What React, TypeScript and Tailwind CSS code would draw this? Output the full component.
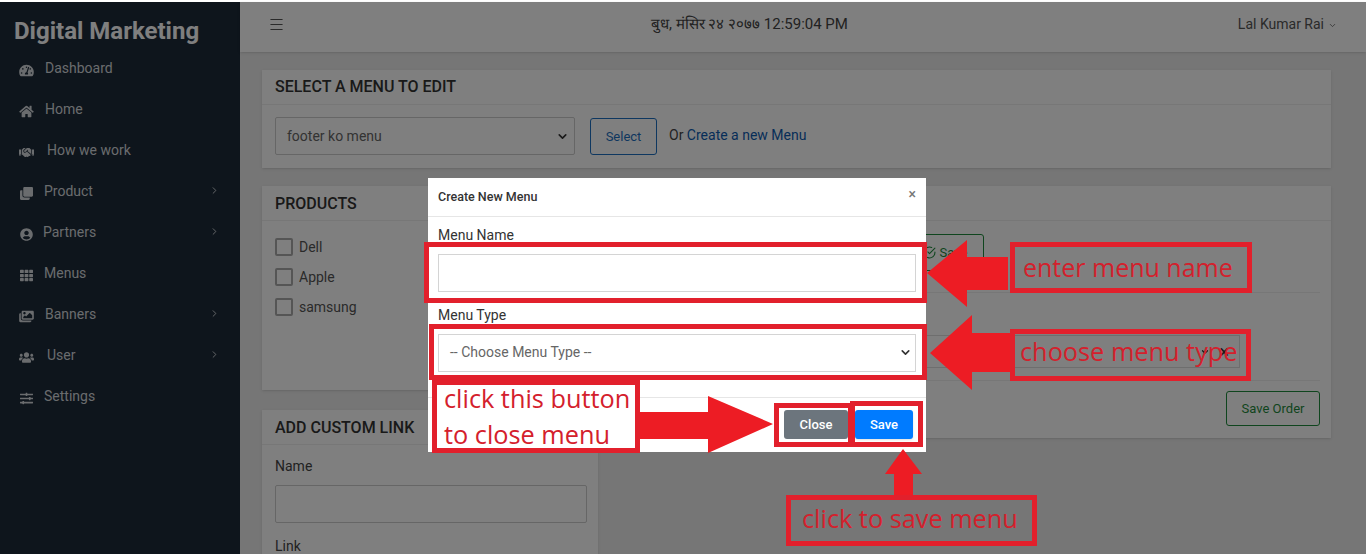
import { ChevronDown, ChevronRight, Menu as MenuIcon } from "lucide-react";
import type { ReactNode } from "react";
import {
  FaClone,
  FaHandshake,
  FaHome,
  FaImages,
  FaSlidersH,
  FaTachometerAlt,
  FaTh,
  FaUserCircle,
  FaUsers,
} from "react-icons/fa";
import { FiCheckCircle } from "react-icons/fi";

const sideItems = [
  { label: "Dashboard", icon: FaTachometerAlt, gap: "ml-[11px]", arrow: false },
  { label: "Home", icon: FaHome, gap: "ml-[11px]", arrow: false },
  { label: "How we work", icon: FaHandshake, gap: "ml-[13px]", arrow: false },
  { label: "Product", icon: FaClone, gap: "ml-[10px]", arrow: true },
  { label: "Partners", icon: FaUserCircle, gap: "ml-[9px]", arrow: true },
  { label: "Menus", icon: FaTh, gap: "ml-[10px]", arrow: false },
  { label: "Banners", icon: FaImages, gap: "ml-[11px]", arrow: true },
  { label: "User", icon: FaUsers, gap: "ml-[13px]", arrow: true },
  { label: "Settings", icon: FaSlidersH, gap: "ml-[10px]", arrow: false },
];

function Sidebar() {
  return (
    <aside className="w-[240px] shrink-0 bg-[#1c2a38] text-[#d4d8dc]">
      <div className="pl-[14px] pt-[14px] text-[24px] font-bold leading-[30px] text-white">
        Digital Marketing
      </div>
      <nav className="mt-[2px] flex flex-col">
        {sideItems.map((item) => (
          <div key={item.label} className="flex h-[41px] items-center pl-[19px] pr-[20px]">
            <item.icon className="mt-[4px] w-[15px] shrink-0 text-[13px]" />
            <span className={"-mt-[1px] text-[14px] " + item.gap}>{item.label}</span>
            {item.arrow && <ChevronRight className="-mt-[2px] ml-auto h-[11px] w-[11px]" />}
          </div>
        ))}
      </nav>
    </aside>
  );
}

function Topbar() {
  return (
    <header className="relative flex h-[50px] shrink-0 items-center bg-white pb-[6px] pl-[28px] pr-[29px] text-[14px] text-[#555] shadow-sm">
      <MenuIcon className="h-[17px] w-[17px]" strokeWidth={1.5} />
      <div className="flex-1 pr-[24px] text-center text-[15px] leading-[20px] text-[#444]">
        बुध, मंसिर २४ २०७७ 12:59:04 PM
      </div>
      <span>Lal Kumar Rai</span>
      <ChevronDown className="ml-[4px] mt-[3px] h-[9px] w-[9px]" />
    </header>
  );
}

function Card({
  title,
  head,
  className,
  children,
}: {
  title: string;
  head?: string;
  className: string;
  children?: ReactNode;
}) {
  return (
    <section className={"bg-white shadow-sm " + className}>
      <div className={"flex h-[35px] items-center border-b border-[#eee] px-[13px] text-[16px] font-medium text-[#333] " + (head ?? "")}>
        {title}
      </div>
      {children}
    </section>
  );
}

function Check({ label }: { label: string }) {
  return (
    <label className="flex h-[30px] items-center text-[14px] text-[#555]">
      <span className="mr-[6px] h-[18px] w-[18px] rounded-[2px] border-2 border-[#aaa]" />
      {label}
    </label>
  );
}

function Content() {
  return (
    <main className="flex min-w-0 flex-1 flex-col gap-[18px] pl-[22px] pr-[35px] pt-[18px]">
      <Card title="SELECT A MENU TO EDIT" className="h-[98px] shrink-0">
        <div className="flex items-center px-[13px] pt-[12px] text-[14px] text-[#444]">
          <div className="flex h-[38px] w-[300px] items-center justify-between rounded-[2px] border border-[#ccc] pl-[11px] pr-[12px] text-[#666]">
            footer ko menu
            <ChevronDown className="-mr-[7px] h-[13px] w-[13px] text-[#333]" strokeWidth={3} />
          </div>
          <button className="ml-[15px] mt-[1px] h-[37px] w-[67px] rounded-[3px] border border-[#1d6fc0] text-[13px] text-[#1d6fc0]">
            Select
          </button>
          <span className="ml-[12px] -mt-[2px]">
            Or <span className="text-[#0d5bb0]">Create a new Menu</span>
          </span>
        </div>
      </Card>
      <div className="flex gap-[18px]">
        <div className="flex w-[336px] shrink-0 flex-col gap-[20px]">
          <Card title="PRODUCTS" head="pt-[2px]" className="h-[204px]">
            <div className="px-[13px] pt-[11px]">
              <Check label="Dell" />
              <Check label="Apple" />
              <Check label="samsung" />
            </div>
          </Card>
          <Card title="ADD CUSTOM LINK" head="pt-[2px]" className="h-[200px]">
            <div className="pl-[13px] pr-[11px] pt-[11px] text-[14px] text-[#444]">
              <div className="leading-[20px]">Name</div>
              <div className="mt-[9px] h-[38px] rounded-[2px] border border-[#ccc]" />
              <div className="mt-[13px] leading-[20px]">Link</div>
            </div>
          </Card>
        </div>
        <Card title="" className="h-[252px] flex-1">
          <div className="mx-[11px] flex h-[72px] justify-end border-b border-[#eee] pr-[336px] pt-[13px]">
            <button className="flex h-[37px] w-[70px] items-center justify-center gap-[4px] rounded-[3px] border border-[#1f8a3c] pr-[8px] text-[13px] text-[#1f8a3c]">
              <FiCheckCircle className="h-[13px] w-[13px]" />
              Save
            </button>
          </div>
          <div className="mx-[11px] h-[88px] border-b border-[#eee] pt-[42px]">
            <div className="mr-[80px] flex h-[33px] items-center justify-end gap-[9px] border border-[#ddd] pr-[10px] text-[#333]">
              <ChevronDown className="h-[10px] w-[10px]" strokeWidth={3} />
              <span className="text-[18px] leading-none">×</span>
            </div>
          </div>
          <div className="mx-[11px] flex justify-end pt-[10px]">
            <button className="h-[35px] w-[94px] rounded-[3px] border border-[#1f8a3c] text-[13px] text-[#1f8a3c]">
              Save Order
            </button>
          </div>
        </Card>
      </div>
    </main>
  );
}

function ModalDialog() {
  return (
    <div className="absolute left-[428px] top-[178px] h-[274px] w-[498px] overflow-hidden bg-white text-[#333]">
      <div className="flex h-[39px] items-center justify-between border-b border-[#e6e6e6] px-[10px]">
        <span className="text-[12.5px] font-medium">Create New Menu</span>
        <span className="-mt-[6px] text-[14px] font-medium leading-none text-[#777]">×</span>
      </div>
      <div className="px-[10px]">
        <div className="mt-[8px] text-[14px] leading-[20px]">Menu Name</div>
        <div className="mt-[9px] h-[38px] border border-[#d4d4d4]" />
        <div className="mt-[13px] text-[14px] leading-[20px]">Menu Type</div>
        <div className="mt-[9px] flex h-[38px] items-center justify-between border border-[#d4d4d4] pb-[2px] pl-[11px] pr-[3px] text-[14px] text-[#666]">
          -- Choose Menu Type --
          <ChevronDown className="h-[13px] w-[13px] text-[#333]" strokeWidth={3} />
        </div>
      </div>
      <div className="mt-[25px] flex justify-end gap-[7px] border-t border-[#e6e6e6] pr-[13px] pt-[12px] text-[13px] font-medium text-white">
        <button className="h-[29px] w-[64px] rounded-[3px] bg-[#6c757d]">Close</button>
        <button className="h-[29px] w-[58px] rounded-[3px] bg-[#007bff] shadow-sm">Save</button>
      </div>
    </div>
  );
}

// red marks someone drew over the screenshot
function Annotations() {
  const box = "absolute border-[5px] border-[#e2202c]";
  const label = "absolute font-['Open_Sans','Noto_Sans',sans-serif] text-[25.3px] text-[#d4202c] whitespace-nowrap";
  return (
    <>
      <svg className="absolute left-0 top-0 h-[554px] w-[1366px]" viewBox="0 0 1366 554" fill="#ed1c24">
        <polygon points="927,273 967,240 967,257 1008,257 1008,290 967,290 967,307" />
        <polygon points="930,353 972,315 972,333 1012,333 1012,372 972,372 972,390" />
        <polygon points="640,412 708,412 708,396 773,424 708,453 708,439 640,439" />
        <polygon points="903,449 922,474 913,474 913,497 894,497 894,474 885,474" />
      </svg>
      <div className={box + " left-[424px] top-[242px] h-[61px] w-[503px]"} />
      <div className={box + " left-[429px] top-[324px] h-[56px] w-[498px]"} />
      <div className={box + " left-[774px] top-[403px] h-[44px] w-[79px]"} />
      <div className={box + " left-[850px] top-[401px] h-[46px] w-[73px]"} />
      <div className={box + " left-[1010px] top-[242px] h-[51px] w-[242px]"} />
      <div className={box + " left-[1010px] top-[329px] h-[52px] w-[241px]"} />
      <div className={box + " left-[786px] top-[495px] h-[51px] w-[251px]"} />
      <div className={box + " left-[432px] top-[380px] h-[73px] w-[208px] bg-white"} />
      <span className={label + " left-[1023px] top-[249px] leading-[36px] text-[25px]"}>enter menu name</span>
      <span className={label + " left-[1020px] top-[333px] leading-[36px]"}>choose menu type</span>
      <span className={label + " left-[802px] top-[500px] leading-[36px]"}>click to save menu</span>
      <span className={label + " left-[444px] top-[380px] leading-[36px]"}>
        click this button
        <br />
        to close menu
      </span>
    </>
  );
}

export default function App() {
  return (
    <div className="relative h-[554px] w-[1366px] overflow-hidden bg-white pt-[2px] font-['Roboto',sans-serif]">
      <div className="flex h-[552px] bg-[#ececec]">
        <Sidebar />
        <div className="flex min-w-0 flex-1 flex-col">
          <Topbar />
          <Content />
        </div>
      </div>
      <div className="absolute inset-x-0 bottom-0 top-[2px] bg-black/50" />
      <ModalDialog />
      <Annotations />
    </div>
  );
}
